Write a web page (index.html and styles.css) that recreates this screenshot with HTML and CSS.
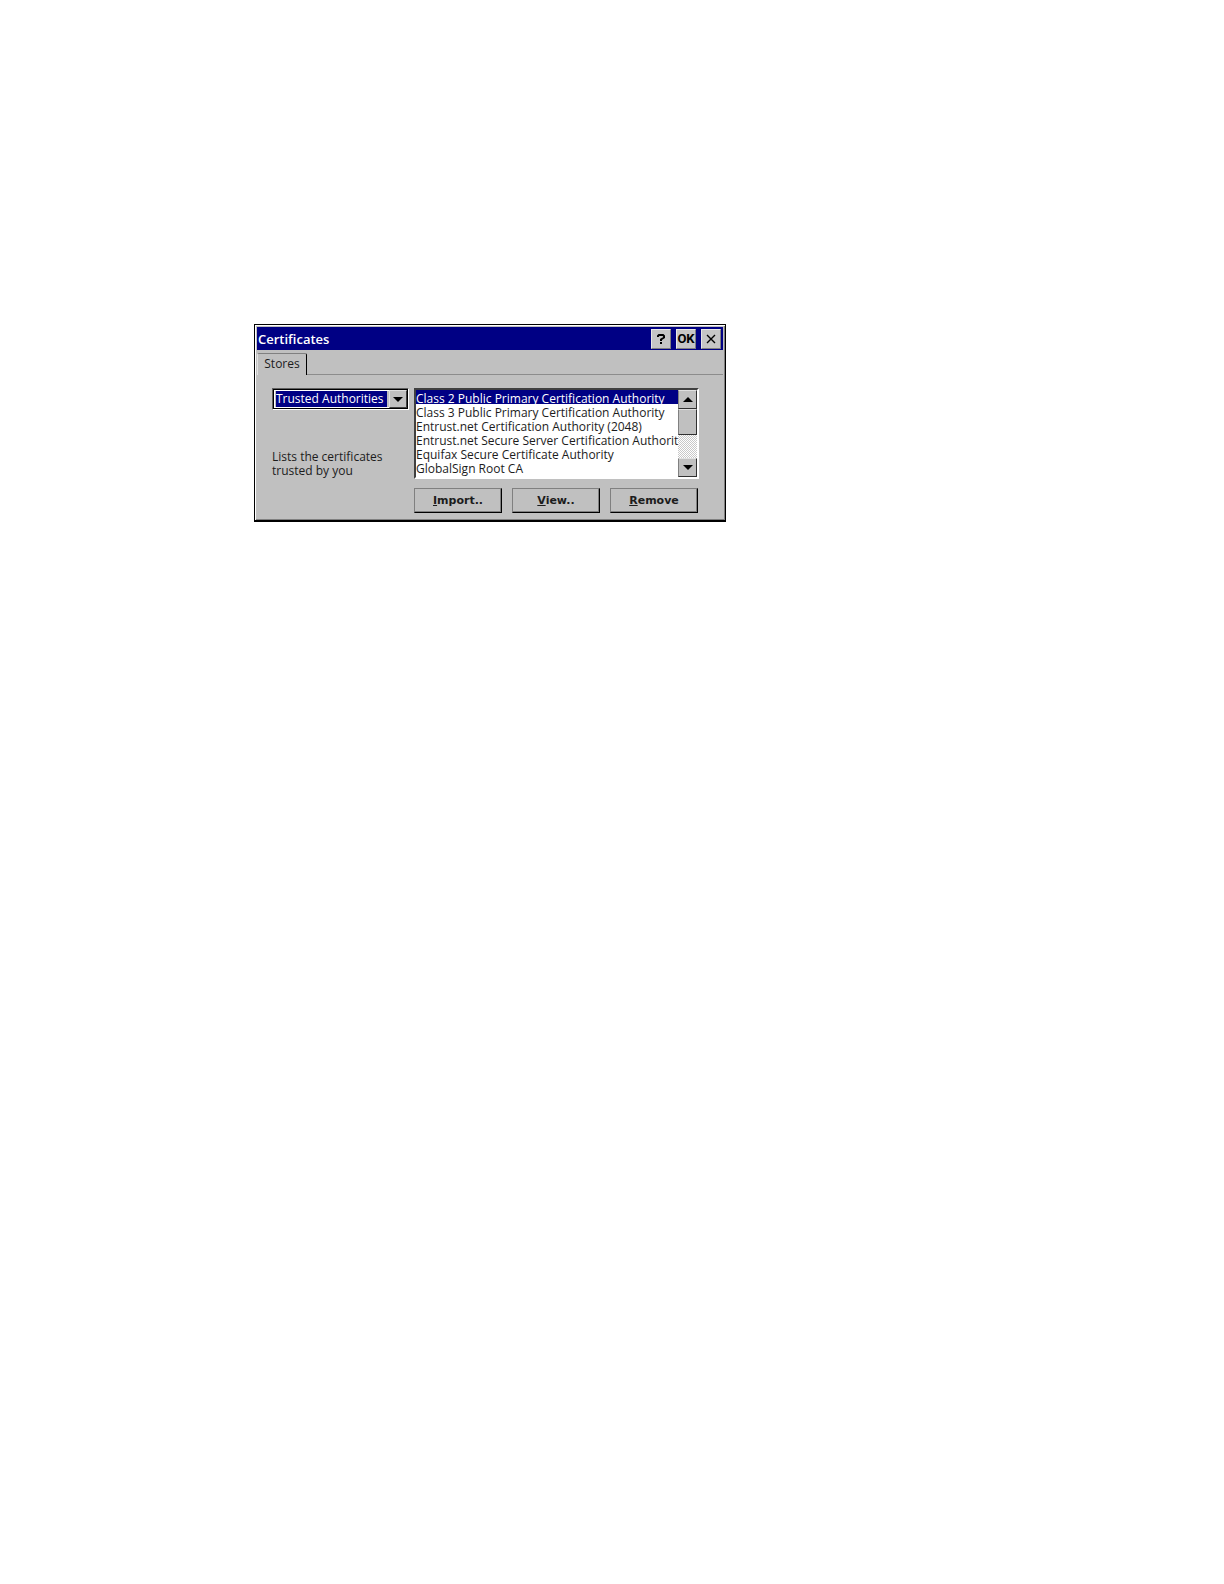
FILE: index.html
```
<!DOCTYPE html>
<html lang="en">
<head>
<meta charset="UTF-8">
<title>Certificates</title>
<link rel="stylesheet" href="styles.css">
</head>
<body>
  <main class="window">
    <header class="title-bar">
      <h1>Certificates</h1>
      <button class="title-button help" type="button" aria-label="Help">
        <svg width="8" height="10" viewBox="0 0 8 10"><path d="M1 3V2L2 1H6L7 2V3.5L4 5.5V7M4 8V10" fill="none" stroke="#000" stroke-width="2"/></svg>
      </button>
      <button class="title-button ok" type="button">OK</button>
      <button class="title-button" type="button" aria-label="Close">
        <svg width="10" height="10" viewBox="0 0 10 10"><path d="M1 1L9 9M9 1L1 9" fill="none" stroke="#000" stroke-width="1.4"/></svg>
      </button>
    </header>

    <nav class="tabs">
      <button class="tab" type="button">Stores</button>
    </nav>

    <section class="panel">
      <div class="store">
        <div class="combo">
          <select id="store" aria-label="Certificate store">
            <option>Trusted Authorities</option>
          </select>
          <span class="combo-arrow"><svg width="10" height="5" viewBox="0 0 10 5"><path d="M0 0H10L5 5Z"/></svg></span>
        </div>
        <label class="hint" for="store">Lists the certificates<br>trusted by you</label>
      </div>

      <div class="certificates">
        <div class="list-box">
          <select class="list" size="7" aria-label="Certificates">
            <option selected>Class 2 Public Primary Certification Authority</option>
            <option>Class 3 Public Primary Certification Authority</option>
            <option>Entrust.net Certification Authority (2048)</option>
            <option>Entrust.net Secure Server Certification Authority</option>
            <option>Equifax Secure Certificate Authority</option>
            <option>GlobalSign Root CA</option>
            <option>GTE CyberTrust Global Root</option>
          </select>
          <div class="scroll-bar">
            <button class="scroll-button" type="button" aria-label="Scroll up"><svg width="10" height="5" viewBox="0 0 10 5"><path d="M0 5H10L5 0Z"/></svg></button>
            <div class="thumb"></div>
            <button class="scroll-button down" type="button" aria-label="Scroll down"><svg width="10" height="5" viewBox="0 0 10 5"><path d="M0 0H10L5 5Z"/></svg></button>
          </div>
        </div>
        <div class="actions">
          <button type="button"><u>I</u>mport..</button>
          <button type="button"><u>V</u>iew..</button>
          <button type="button"><u>R</u>emove</button>
        </div>
      </div>
    </section>
  </main>
</body>
</html>
```

FILE: styles.css
```
* {
  box-sizing: border-box;
  margin: 0;
  padding: 0;
}

body {
  background: #fff;
  padding: 324px 40px 40px 254px;
  font: 12px/14px "Open Sans", sans-serif;
  color: #1c1c1c;
}

button, select {
  font: inherit;
  color: inherit;
  border-radius: 0;
  outline: none;
}

.window {
  max-width: 472px;
  background: #c0c0c0;
  border: 1px solid #000;
  border-bottom-width: 2px;
  box-shadow: inset 1px 1px #fff, inset -1px -1px #808080;
  padding: 2px;
}

/* title bar */
.title-bar {
  display: flex;
  align-items: center;
  gap: 5px;
  height: 23px;
  padding: 0 2px 0 1px;
  background: #000084;
  color: #fff;
}

.title-bar h1 {
  flex: 1;
  font-size: 13px;
  font-weight: 600;
}

.title-button {
  display: flex;
  align-items: center;
  justify-content: center;
  width: 20px;
  height: 20px;
  background: #c6c6c6;
  border: 1px solid;
  border-color: #e8e8e8 #808080 #808080 #e8e8e8;
}

.ok {
  color: #000;
  font: bold 13px "Roboto", sans-serif;
}

/* tabs */
.tabs {
  display: flex;
  padding-top: 3px;
  border-bottom: 1px solid #8c8c8c;
}

.tab {
  height: 22px;
  width: 50px;
  margin-bottom: -1px;
  padding-bottom: 1px;
  background: #c0c0c0;
  border: 1px solid #808080;
  border-right-color: #000;
  border-bottom: 0;
  border-left-color: #e0e0e0;
  border-radius: 2px 2px 0 0;
}

/* panel */
.panel {
  display: flex;
  gap: 5px;
  padding: 13px 24px 5px 15px;
}

.store {
  flex: none;
  width: 137px;
}

.combo {
  position: relative;
  height: 22px;
  border: 1px solid;
  border-color: #606060 #fff #fff #606060;
}

.combo select {
  appearance: none;
  display: block;
  width: 100%;
  height: 20px;
  padding: 1px 20px 1px 2px;
  border: 1px solid #000;
  background: #000084 content-box;
  color: #fff;
  box-shadow: inset 0 0 0 1px #fff;
}

.combo-arrow {
  position: absolute;
  top: 1px;
  right: 1px;
  display: flex;
  align-items: center;
  justify-content: center;
  width: 18px;
  height: 18px;
  background: #c0c0c0;
  border: 1px solid;
  border-color: #e0e0e0 #404040 #404040 #e0e0e0;
  pointer-events: none;
}

.hint {
  display: block;
  margin-top: 40px;
}

.certificates {
  flex: 1;
  min-width: 0;
}

.list-box {
  display: flex;
  height: 91px;
  background: #fff;
  border: 2px solid;
  border-color: #404040 #fff #fff #404040;
}

.list {
  flex: 1;
  min-width: 0;
  height: 87px;
  border: 0;
  background: #fff;
  overflow: hidden;
}

.list option {
  height: 14px;
  min-height: 14px;
  line-height: 14px;
  padding: 0;
  overflow: visible;
}

.list option:checked {
  background: linear-gradient(#000084, #000084);
  -webkit-text-fill-color: #fff;
}

.scroll-bar {
  display: flex;
  flex: none;
  flex-direction: column;
  width: 19px;
  background: repeating-conic-gradient(#fff 0 25%, #c8c8c8 0 50%) 0 0 / 2px 2px;
}

.scroll-button, .thumb {
  flex: none;
  background: #c0c0c0;
  border: 1px solid;
  border-color: #e0e0e0 #303030 #303030 #808080;
}

.scroll-button {
  display: flex;
  align-items: center;
  justify-content: center;
  height: 19px;
}

.thumb {
  height: 26px;
}

.down {
  margin-top: auto;
}

.actions {
  display: grid;
  grid-template-columns: repeat(3, 1fr);
  gap: 10px;
  padding: 9px 1px 0 0;
}

.actions button {
  height: 25px;
  background: #c0c0c0;
  border: 1px solid;
  border-color: #808080 #000 #000 #808080;
  box-shadow: inset -1px -1px #808080;
  font: bold 11px/14px "DejaVu Sans", sans-serif;
}
```
